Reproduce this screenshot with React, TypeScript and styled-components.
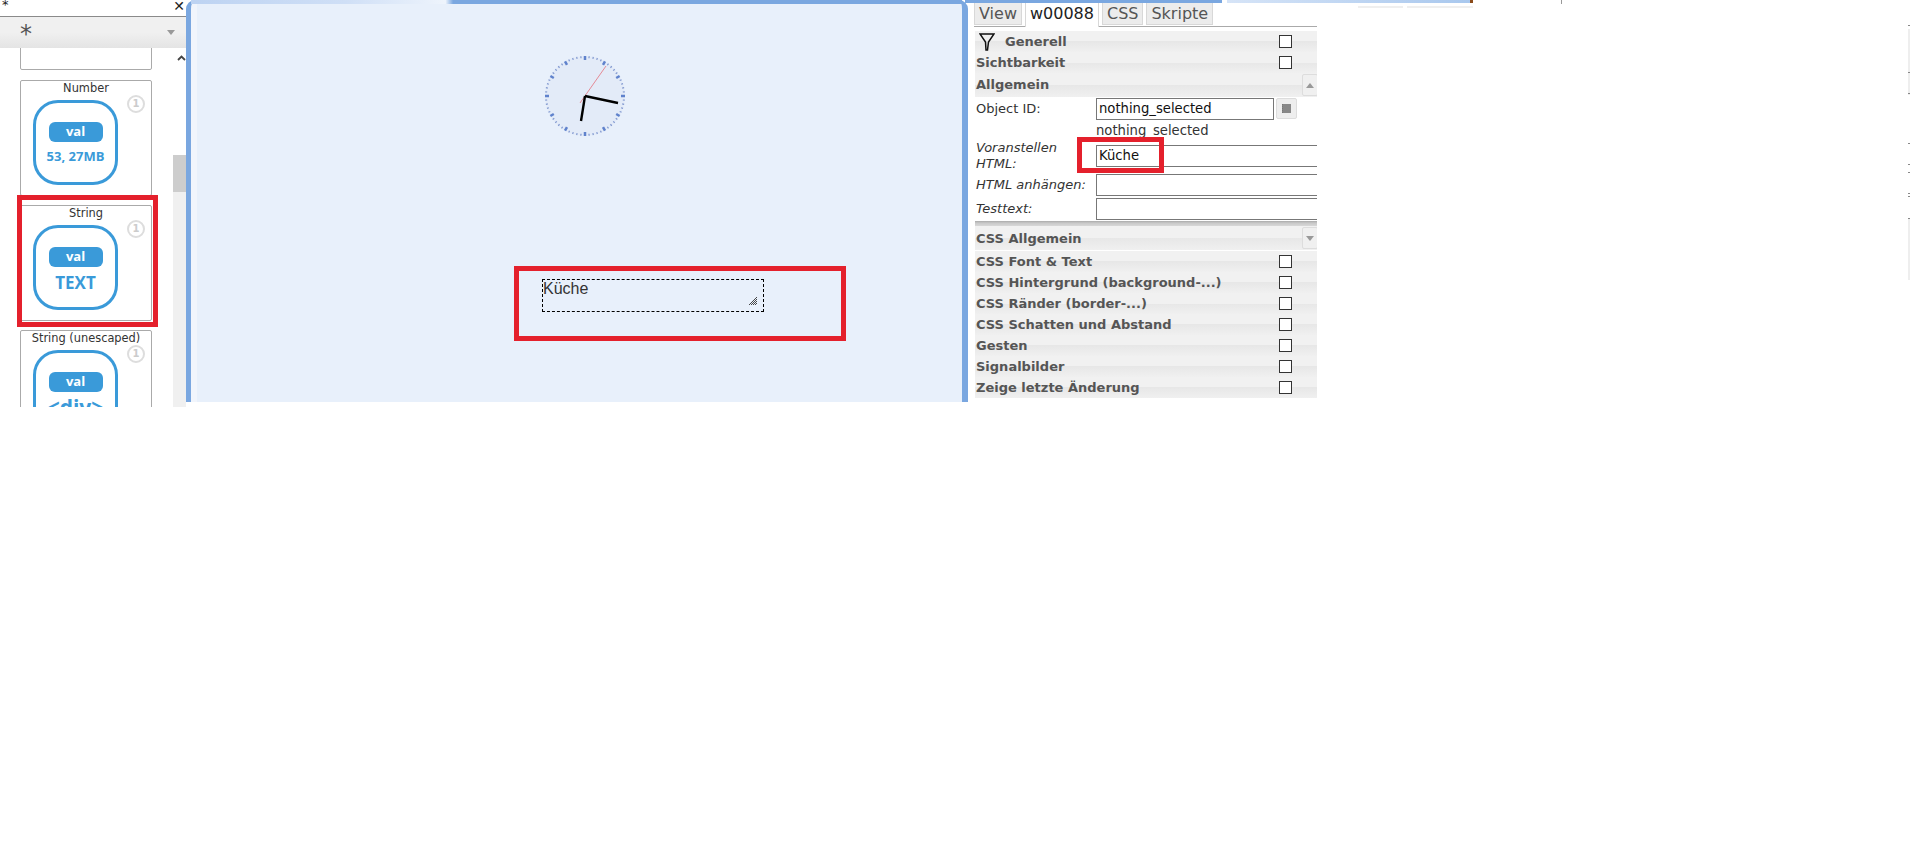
import React from "react";
import styled, { createGlobalStyle } from "styled-components";

const GlobalStyle = createGlobalStyle`
    html, body {
        margin: 0;
        padding: 0;
        background: #fff;
    }
    body {
        font-family: "DejaVu Sans", Verdana, sans-serif;
    }
`;

const Page = styled.div`
    position: relative;
    width: 1910px;
    height: 844px;
    overflow: hidden;
    background: #fff;
`;

const Workspace = styled.div`
    display: flex;
    align-items: flex-start;
    width: 1317px;
    height: 407px;
`;

/* left widget palette */

const Palette = styled.aside`
    display: flex;
    flex-direction: column;
    flex: none;
    width: 186px;
    height: 407px;
`;

const PaletteTitle = styled.div`
    display: flex;
    justify-content: space-between;
    height: 16px;
    padding: 0 1px 0 2px;
    border-bottom: 1px solid #8a8a8a;
    font-size: 13px;
    line-height: 9px;
    color: #222;
`;

const PaletteClose = styled.span`
    padding-top: 1px;
    font-size: 14px;
    font-weight: 700;
    line-height: 10px;
    color: #222;
`;

const PaletteFilter = styled.div`
    display: flex;
    justify-content: space-between;
    align-items: center;
    height: 31px;
    padding: 0 11px 0 20px;
    background: linear-gradient(#f0f0f0 50%, #e4e4e4);
    color: #555;
    font-size: 24px;
    line-height: 31px;
`;

const FilterStar = styled.span`
    padding-top: 4px;
`;

const FilterArrow = styled.span`
    width: 0;
    height: 0;
    border-left: 4px solid transparent;
    border-right: 4px solid transparent;
    border-top: 5px solid #999;
`;

const PaletteBody = styled.div`
    display: flex;
    flex: 1;
    min-height: 0;
`;

const CardList = styled.div`
    flex: 1;
    height: 359px;
    padding-left: 20px;
    overflow: hidden;
`;

const Card = styled.div<{ $height: number }>`
    position: relative;
    box-sizing: border-box;
    width: 132px;
    height: ${(p) => p.$height}px;
    margin-bottom: 9px;
    border: 1px solid #aaa;
    border-radius: 2px;
    background: #fff;
    text-align: center;
    color: #333;
    font-size: 11.4px;
    line-height: 15px;
`;

const EmptyCard = styled(Card)`
    margin-top: -26px;
    margin-bottom: 10px;
`;

const CardIcon = styled.div`
    box-sizing: border-box;
    display: flex;
    flex-direction: column;
    align-items: center;
    width: 85px;
    height: 85px;
    margin: 4px 0 0 12px;
    padding-top: 19px;
    border: 3px solid #3a9ad9;
    border-radius: 25px;
    font-family: "Open Sans", "DejaVu Sans", sans-serif;
    font-weight: 700;
    color: #3a9ad9;
`;

const ValPill = styled.div`
    flex: none;
    width: 54px;
    height: 20px;
    border-radius: 6px;
    background: #3a9ad9;
    color: #fff;
    font-size: 13px;
    line-height: 19px;
`;

const IconValue = styled.div<{ $size: number; $top: number }>`
    margin-top: ${(p) => p.$top}px;
    font-size: ${(p) => p.$size}px;
    line-height: 24px;
    white-space: nowrap;
`;

const CountBadge = styled.span`
    position: absolute;
    top: 14px;
    right: 6px;
    box-sizing: border-box;
    width: 18px;
    height: 18px;
    border: 2px solid #ddd;
    border-radius: 50%;
    color: #ccc;
    font-size: 10px;
    font-weight: 700;
    line-height: 14px;
    text-align: center;
`;

const PaletteScroll = styled.div`
    display: flex;
    flex-direction: column;
    flex: none;
    width: 13px;
    height: 359px;
    background: #f0f0f0;
`;

const ScrollUp = styled.div`
    height: 107px;
    padding-top: 7px;
    box-sizing: border-box;
    background: #fff;
`;

const ScrollChevron = styled.svg`
    display: block;
    margin: 0 0 0 4px;
`;

const ScrollThumb = styled.div`
    height: 37px;
    background: #cdcdcd;
`;

/* the canvas with the placed widgets */

const Canvas = styled.main`
    position: relative;
    flex: none;
    box-sizing: border-box;
    width: 782px;
    height: 402px;
    border-left: 5px solid #7aa7e0;
    border-right: 6px solid #7aa7e0;
    border-radius: 9px 9px 0 0;
    background: linear-gradient(90deg, #f1f5fc 6px, #e8f0fb 6px);
`;

const CanvasTopEdge = styled.div`
    position: absolute;
    left: 0;
    right: 0;
    top: 0;
    height: 4px;
    background: linear-gradient(90deg, #bdd3f2, #cfdff6 20%, #eef4fc 33%, #7aa7e0 34%);
`;

const ClockWidget = styled.svg`
    position: absolute;
    left: 351px;
    top: 53px;
`;

const StringWidget = styled.div`
    position: absolute;
    left: 351px;
    top: 279px;
    box-sizing: border-box;
    width: 222px;
    height: 33px;
    border: 1px dashed #000;
    color: #333;
    font-family: "Liberation Sans", Arial, sans-serif;
    font-size: 16px;
    line-height: 18px;
`;

const ResizeGrip = styled.svg`
    position: absolute;
    right: 6px;
    bottom: 6px;
`;

/* right attribute panel */

const Inspector = styled.aside`
    flex: none;
    box-sizing: border-box;
    width: 349px;
    height: 400px;
    padding: 2px 0 0 6px;
    overflow: hidden;
`;

const Tabs = styled.div`
    display: flex;
    gap: 3px;
    height: 24px;
    border-bottom: 1px solid #aaa;
`;

const Tab = styled.div<{ $active?: boolean }>`
    box-sizing: border-box;
    height: ${(p) => (p.$active ? 25 : 23)}px;
    padding: 0 4px;
    border: 1px solid #d8d8d8;
    border-bottom: ${(p) => (p.$active ? "none" : "1px solid #d8d8d8")};
    background: ${(p) => (p.$active ? "#fff" : "#ececec")};
    color: ${(p) => (p.$active ? "#222" : "#555")};
    font-size: 16px;
    line-height: 22px;
`;

const Groups = styled.div`
    margin-top: 4px;
    margin-left: 1px;
`;

const GroupRow = styled.div<{ $height?: number; $lift?: number }>`
    position: relative;
    display: flex;
    align-items: center;
    box-sizing: border-box;
    height: ${(p) => p.$height ?? 21}px;
    padding: 0 0 ${(p) => p.$lift ?? 0}px 1px;
    background: linear-gradient(#f1f1f1 50%, #e7e7e7 50%, #f0f0f0);
    color: #555;
    font-size: 13px;
    font-weight: 700;
    white-space: nowrap;
`;

const Funnel = styled.svg`
    flex: none;
    margin: 0 10px 0 3px;
`;

const Check = styled.span`
    position: absolute;
    left: 304px;
    top: 4px;
    box-sizing: border-box;
    width: 13px;
    height: 13px;
    background: #fff;
    border: 1px solid #333;
`;

const CollapseButton = styled.span`
    position: absolute;
    right: -1px;
    top: 1px;
    box-sizing: border-box;
    display: flex;
    align-items: center;
    justify-content: center;
    width: 16px;
    height: 22px;
    border: 1px solid #ddd;
    border-radius: 2px;
    background: #f0f0f0;
`;

const Caret = styled.span<{ $up?: boolean }>`
    width: 0;
    height: 0;
    border-left: 4px solid transparent;
    border-right: 4px solid transparent;
    border-top: ${(p) => (p.$up ? "none" : "5px solid #999")};
    border-bottom: ${(p) => (p.$up ? "5px solid #999" : "none")};
`;

const FieldRow = styled.div<{ $top: number; $height: number }>`
    display: flex;
    margin-top: ${(p) => p.$top}px;
    height: ${(p) => p.$height}px;
`;

const FieldLabel = styled.label<{ $italic?: boolean }>`
    flex: none;
    width: 121px;
    padding-left: 1px;
    box-sizing: border-box;
    color: #333;
    font-size: 13px;
    font-style: ${(p) => (p.$italic ? "italic" : "normal")};
    line-height: 16px;
    align-self: center;
`;

const FieldInput = styled.div<{ $width?: number }>`
    box-sizing: border-box;
    flex: none;
    width: ${(p) => p.$width ?? 240}px;
    height: 100%;
    padding-left: 2px;
    border: 1px solid #777;
    background: #fff;
    color: #111;
    font-size: 13.2px;
    line-height: 19px;
`;

const PickerButton = styled.span`
    flex: none;
    display: flex;
    align-items: center;
    justify-content: center;
    box-sizing: border-box;
    width: 21px;
    height: 21px;
    margin-left: 2px;
    border: 1px solid #ddd;
    border-radius: 2px;
    background: #eee;
`;

const PickerGlyph = styled.span`
    width: 8px;
    height: 9px;
    background: #888;
    border-left: 1px dotted #777;
`;

const FieldHint = styled.div`
    height: 21px;
    padding-left: 121px;
    color: #333;
    font-size: 13.2px;
    line-height: 21px;
`;

const Splitter = styled.div`
    height: 5px;
    margin-top: 1px;
    background: linear-gradient(#aaa, #c8c8c8 40%, #d8d8d8);
`;

const SectionStack = styled.div`
    margin-top: 1px;
`;

/* callouts drawn over the screenshot */

const Callout = styled.div<{ $x: number; $y: number; $w: number; $h: number }>`
    position: absolute;
    left: ${(p) => p.$x}px;
    top: ${(p) => p.$y}px;
    box-sizing: border-box;
    width: ${(p) => p.$w}px;
    height: ${(p) => p.$h}px;
    border: 5px solid #e4202c;
    pointer-events: none;
`;

/* leftovers of a window behind the panels */

const TopGlimmer = styled.div`
    position: absolute;
    left: 965px;
    top: 0;
    width: 508px;
    height: 3px;
    background: linear-gradient(
        90deg,
        #7aa7e0 0,
        #7aa7e0 50.6%,
        #fff 50.6%,
        #fff 51.6%,
        #d6e4f7 51.6%,
        #a9c8ee 99.5%,
        #8a4a1a 99.5%
    );
`;

const FaintTab = styled.span<{ $x: number; $w: number }>`
    position: absolute;
    left: ${(p) => p.$x}px;
    top: 6px;
    width: ${(p) => p.$w}px;
    height: 2px;
    background: #efefef;
`;

const TopTick = styled.span`
    position: absolute;
    left: 1561px;
    top: 0;
    width: 1px;
    height: 4px;
    background: #999;
`;

const EdgeBand = styled.span<{ $y: number; $h: number }>`
    position: absolute;
    right: 0;
    top: ${(p) => p.$y}px;
    width: 2px;
    height: ${(p) => p.$h}px;
    background: #eee;
`;

const EdgeTick = styled.span<{ $y: number }>`
    position: absolute;
    right: 0;
    top: ${(p) => p.$y}px;
    width: 2px;
    height: 1px;
    background: #888;
`;

const sections = [
    "CSS Font & Text",
    "CSS Hintergrund (background-...)",
    "CSS Ränder (border-...)",
    "CSS Schatten und Abstand",
    "Gesten",
    "Signalbilder",
    "Zeige letzte Änderung",
];

const edgeTicks = [25, 72, 93, 143, 164, 172, 193, 196, 218];

const toRad = (deg: number) => (deg * Math.PI) / 180;

const Clock = () => {
    const c = 43;
    const ticks = Array.from({ length: 60 }, (_, i) => {
        const major = i % 5 === 0;
        const a = toRad(i * 6);
        const r1 = major ? 36 : 38;
        return (
            <line
                key={i}
                x1={c + Math.sin(a) * r1}
                y1={c - Math.cos(a) * r1}
                x2={c + Math.sin(a) * 40}
                y2={c - Math.cos(a) * 40}
                stroke={major ? "#5f82cc" : "#7f97cf"}
                strokeWidth={major ? 2.5 : 1.2}
            />
        );
    });
    return (
        <ClockWidget width="86" height="86" viewBox="0 0 86 86">
            <circle cx={c} cy={c} r="40" fill="#e3ebf8" />
            {ticks}
            <line x1="38" y1="50" x2="64" y2="13" stroke="#e58a96" strokeWidth="1" />
            <line x1={c} y1={c} x2="39" y2="68" stroke="#000" strokeWidth="2.4" />
            <line x1={c} y1={c} x2="76" y2="50" stroke="#000" strokeWidth="2.4" />
        </ClockWidget>
    );
};

const App = () => {
    return (
        <Page>
            <GlobalStyle />
            <Workspace>
                <Palette>
                    <PaletteTitle>
                        <span>*</span>
                        <PaletteClose>✕</PaletteClose>
                    </PaletteTitle>
                    <PaletteFilter>
                        <FilterStar>*</FilterStar>
                        <FilterArrow />
                    </PaletteFilter>
                    <PaletteBody>
                        <CardList>
                            <EmptyCard $height={48} />
                            <Card $height={116}>
                                Number
                                <CountBadge>1</CountBadge>
                                <CardIcon>
                                    <ValPill>val</ValPill>
                                    <IconValue $size={13} $top={2}>53, 27MB</IconValue>
                                </CardIcon>
                            </Card>
                            <Card $height={116}>
                                String
                                <CountBadge>1</CountBadge>
                                <CardIcon>
                                    <ValPill>val</ValPill>
                                    <IconValue $size={17} $top={4}>TEXT</IconValue>
                                </CardIcon>
                            </Card>
                            <Card $height={116}>
                                String (unescaped)
                                <CountBadge>1</CountBadge>
                                <CardIcon>
                                    <ValPill>val</ValPill>
                                    <IconValue $size={21} $top={3}>&lt;div&gt;</IconValue>
                                </CardIcon>
                            </Card>
                        </CardList>
                        <PaletteScroll>
                            <ScrollUp>
                                <ScrollChevron width="9" height="6" viewBox="0 0 9 6">
                                    <path d="M1 5 L4.5 1.5 L8 5" fill="none" stroke="#444" strokeWidth="1.8" />
                                </ScrollChevron>
                            </ScrollUp>
                            <ScrollThumb />
                        </PaletteScroll>
                    </PaletteBody>
                </Palette>
                <Canvas>
                    <CanvasTopEdge />
                    <Clock />
                    <StringWidget>
                        Küche
                        <ResizeGrip width="8" height="8" viewBox="0 0 8 8">
                            <path d="M0 8 L8 0 M2 8 L8 2 M4 8 L8 4 M6 8 L8 6" stroke="#333" strokeWidth="0.9" />
                        </ResizeGrip>
                    </StringWidget>
                </Canvas>
                <Inspector>
                    <Tabs>
                        <Tab>View</Tab>
                        <Tab $active>w00088</Tab>
                        <Tab>CSS</Tab>
                        <Tab>Skripte</Tab>
                    </Tabs>
                    <Groups>
                        <GroupRow>
                            <Funnel width="16" height="18" viewBox="0 0 16 18">
                                <path d="M1 1 H15 L9.5 9 L8.5 17 L7 17 L6.5 9 Z" fill="none" stroke="#111" strokeWidth="1.5" />
                            </Funnel>
                            Generell
                            <Check />
                        </GroupRow>
                        <GroupRow>
                            Sichtbarkeit
                            <Check />
                        </GroupRow>
                        <GroupRow $height={24} $lift={2}>
                            Allgemein
                            <CollapseButton>
                                <Caret $up />
                            </CollapseButton>
                        </GroupRow>
                        <FieldRow $top={1} $height={22}>
                            <FieldLabel>Object ID:</FieldLabel>
                            <FieldInput $width={178}>nothing_selected</FieldInput>
                            <PickerButton>
                                <PickerGlyph />
                            </PickerButton>
                        </FieldRow>
                        <FieldHint>nothing_selected</FieldHint>
                        <FieldRow $top={4} $height={22}>
                            <FieldLabel $italic>Voranstellen HTML:</FieldLabel>
                            <FieldInput>Küche</FieldInput>
                        </FieldRow>
                        <FieldRow $top={7} $height={22}>
                            <FieldLabel $italic>HTML anhängen:</FieldLabel>
                            <FieldInput />
                        </FieldRow>
                        <FieldRow $top={2} $height={22}>
                            <FieldLabel $italic>Testtext:</FieldLabel>
                            <FieldInput />
                        </FieldRow>
                        <Splitter />
                        <GroupRow $height={24}>
                            CSS Allgemein
                            <CollapseButton>
                                <Caret />
                            </CollapseButton>
                        </GroupRow>
                        <SectionStack>
                            {sections.map((name) => (
                                <GroupRow key={name}>
                                    {name}
                                    <Check />
                                </GroupRow>
                            ))}
                        </SectionStack>
                    </Groups>
                </Inspector>
            </Workspace>
            <TopGlimmer />
            <FaintTab $x={1358} $w={45} />
            <FaintTab $x={1407} $w={66} />
            <TopTick />
            <EdgeBand $y={29} $h={66} />
            <EdgeBand $y={219} $h={61} />
            {edgeTicks.map((y) => (
                <EdgeTick key={y} $y={y} />
            ))}
            <Callout $x={17} $y={195} $w={141} $h={132} />
            <Callout $x={514} $y={266} $w={332} $h={75} />
            <Callout $x={1077} $y={137} $w={87} $h={36} />
        </Page>
    );
};

export default App;
